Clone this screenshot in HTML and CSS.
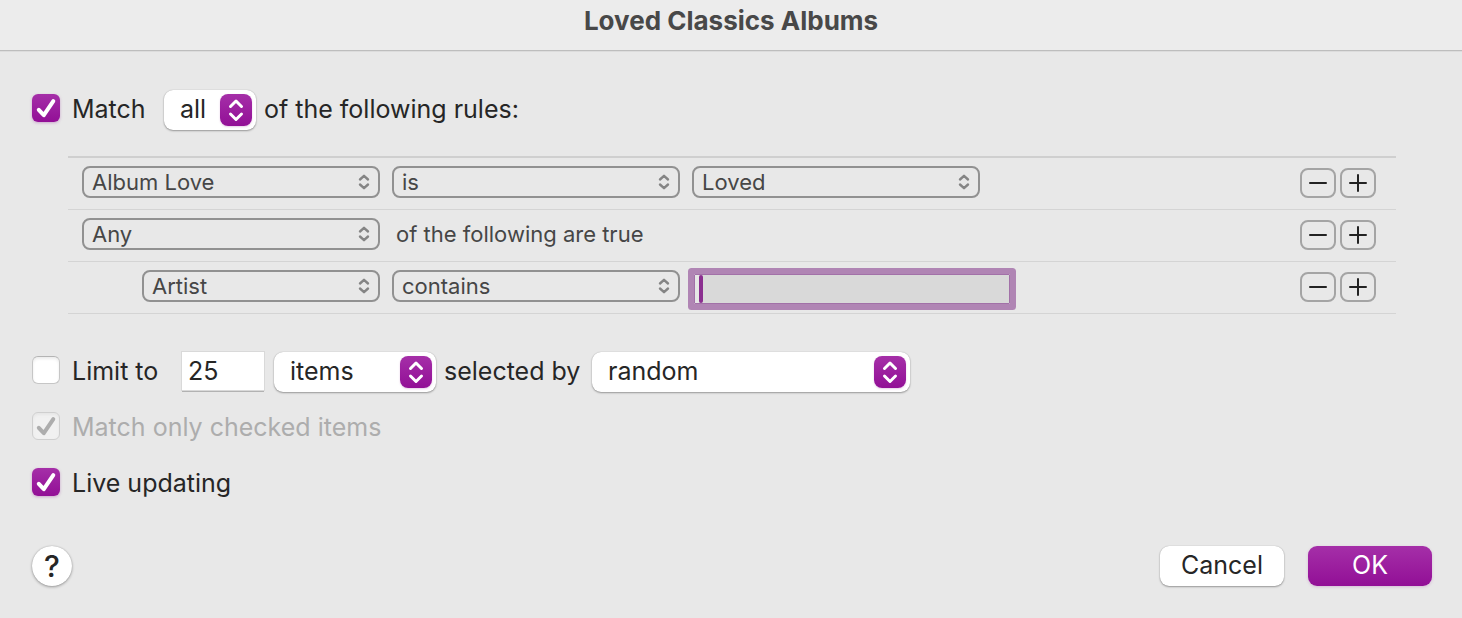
FILE: index.html
```html
<!DOCTYPE html>
<html lang="en">
<head>
<meta charset="utf-8">
<title>Loved Classics Albums</title>
<link rel="stylesheet" href="styles.css">
</head>
<body>
<svg class="defs" aria-hidden="true">
  <symbol id="tick" viewBox="0 0 28 28"><path d="M6.800 15.800 L11.800 21.200 L21.300 7.200" fill="none" stroke="currentColor" stroke-width="4" stroke-linecap="round" stroke-linejoin="round"/></symbol>
  <symbol id="arrows" viewBox="0 0 32 32"><path d="M10.500 12.500 L16 7 L21.500 12.500 M10.500 20 L16 25.500 L21.500 20" fill="none" stroke="currentColor" stroke-width="3" stroke-linecap="round" stroke-linejoin="round"/></symbol>
  <symbol id="arrows-small" viewBox="0 0 12 16"><path d="M2 5.500 L6 1.800 L10 5.500 M2 10.500 L6 14.200 L10 10.500" fill="none" stroke="currentColor" stroke-width="2.400" stroke-linecap="round" stroke-linejoin="round"/></symbol>
  <symbol id="minus" viewBox="0 0 18 18"><path d="M1 9 H17" stroke="currentColor" stroke-width="2" stroke-linecap="round"/></symbol>
  <symbol id="plus" viewBox="0 0 18 18"><path d="M1 9 H17 M9 1 V17" stroke="currentColor" stroke-width="2" stroke-linecap="round"/></symbol>
</svg>
<header class="titlebar"><h1 class="title">Loved Classics Albums</h1></header>
<form class="sheet">
  <div class="line">
    <label class="check"><span class="box"><input type="checkbox" checked><svg class="tick"><use href="#tick"/></svg></span><span class="match">Match</span></label>
    <span class="popup popup-all"><select aria-label="Match mode"><option>all</option></select><svg class="arrows"><use href="#arrows"/></svg></span>
    <span class="words">of the following rules:</span>
  </div>

  <div class="rules">
    <div class="rule">
      <span class="pick pick-wide"><select aria-label="Field"><option>Album Love</option></select><svg class="arrows-small"><use href="#arrows-small"/></svg></span>
      <span class="pick"><select aria-label="Comparison"><option>is</option></select><svg class="arrows-small"><use href="#arrows-small"/></svg></span>
      <span class="pick"><select aria-label="Value"><option>Loved</option></select><svg class="arrows-small"><use href="#arrows-small"/></svg></span>
      <span class="steps"><button type="button" class="step" aria-label="Remove rule"><svg><use href="#minus"/></svg></button><button type="button" class="step" aria-label="Add rule"><svg><use href="#plus"/></svg></button></span>
    </div>
    <div class="rule">
      <span class="pick pick-wide"><select aria-label="Group mode"><option>Any</option></select><svg class="arrows-small"><use href="#arrows-small"/></svg></span>
      <span class="rule-words">of the following are true</span>
      <span class="steps"><button type="button" class="step" aria-label="Remove rule"><svg><use href="#minus"/></svg></button><button type="button" class="step" aria-label="Add rule"><svg><use href="#plus"/></svg></button></span>
    </div>
    <div class="rule rule-nested">
      <span class="pick pick-nested"><select aria-label="Field"><option>Artist</option></select><svg class="arrows-small"><use href="#arrows-small"/></svg></span>
      <span class="pick"><select aria-label="Comparison"><option>contains</option></select><svg class="arrows-small"><use href="#arrows-small"/></svg></span>
      <span class="entry"><input type="text" aria-label="Artist name"><i class="caret"></i></span>
      <span class="steps"><button type="button" class="step" aria-label="Remove rule"><svg><use href="#minus"/></svg></button><button type="button" class="step" aria-label="Add rule"><svg><use href="#plus"/></svg></button></span>
    </div>
  </div>

  <div class="line">
    <label class="check"><span class="box"><input type="checkbox"></span><span class="limit">Limit to</span></label>
    <input class="amount" type="text" value="25" aria-label="Limit amount">
    <span class="popup popup-items"><select aria-label="Limit unit"><option>items</option></select><svg class="arrows"><use href="#arrows"/></svg></span>
    <span class="words selected-by">selected by</span>
    <span class="popup popup-order"><select aria-label="Selected by"><option>random</option></select><svg class="arrows"><use href="#arrows"/></svg></span>
  </div>
  <div class="options">
    <label class="check check-off"><span class="box"><input type="checkbox" checked disabled><svg class="tick"><use href="#tick"/></svg></span>Match only checked items</label>
    <label class="check"><span class="box"><input type="checkbox" checked><svg class="tick"><use href="#tick"/></svg></span>Live updating</label>
  </div>

  <footer class="actions">
    <button type="button" class="help" aria-label="Help">?</button>
    <button type="button" class="button">Cancel</button>
    <button type="submit" class="button button-main">OK</button>
  </footer>
</form>
</body>
</html>
```
FILE: styles.css
```css
* { box-sizing: border-box; }
body {
  margin: 0;
  background: #e8e8e8;
  color: #262626;
  font: 430 25px/38px Inter, "Liberation Sans", sans-serif;
}
input, select, button {
  appearance: none;
  margin: 0;
  padding: 0;
  border: 0;
  outline: 0;
  background: none;
  color: inherit;
  font: inherit;
}
.defs { display: none; }
svg { display: block; }

.titlebar {
  height: 52px;
  padding-top: 2px;
  background: #ececec;
  border-bottom: 1px solid #dcdcdc;
  box-shadow: inset 0 -1px #bdbdbd;
}
.title {
  margin: 0;
  color: #484848;
  font-size: 26px;
  font-weight: 700;
  text-align: center;
}
.sheet { padding: 38px 30px 32px 32px; }
.line { display: flex; align-items: flex-start; white-space: nowrap; }
.words { padding: 0 8px; }
.selected-by { min-width: 156px; }

.check { display: flex; align-items: flex-start; gap: 12px; height: 38px; }
.match { min-width: 92px; }
.limit { min-width: 110px; }
.check-off { color: #adadad; }
.box { display: grid; width: 28px; height: 28px; margin-top: 4px; }
.box > * { grid-area: 1 / 1; width: 28px; height: 28px; }
.box input {
  border: 1px solid #c6c6c6;
  border-top-color: #b4b4b4;
  border-radius: 6px;
  background: #fff;
  box-shadow: inset 0 2px 3px #ececec;
}
.box input:checked {
  border: 0;
  background: linear-gradient(#a52fa8, #920f96);
  box-shadow: 0 1px 3px #a040a466;
}
.box input:checked:disabled {
  border: 1px solid #cfcfcf;
  background: #f1f1f1;
  box-shadow: inset 0 2px 3px #e6e6e6;
}
.tick { color: #fff; pointer-events: none; }
.check-off .tick { color: #adadad; }

.popup { display: grid; height: 40px; }
.popup > * { grid-area: 1 / 1; }
.popup select {
  padding: 0 40px 2px 16px;
  border-radius: 9px;
  background: #fff;
  box-shadow: 0 0 1px #0004, 0 1px 2px #0005;
}
.popup-all { width: 92px; }
.popup-items { width: 162px; }
.popup-order { width: 318px; }
.arrows {
  width: 32px;
  height: 32px;
  margin: 4px;
  justify-self: end;
  border-radius: 8px;
  background: linear-gradient(#a52fa8, #920f96);
  box-shadow: 0 1px 2px #a040a444;
  color: #fff;
  pointer-events: none;
}

.rules {
  margin: 26px 36px 38px 36px;
  border-top: 2px solid #cfcfcf;
  color: #464646;
  font-size: 22px;
  font-weight: 400;
  line-height: 32px;
}
.rule {
  display: flex;
  align-items: flex-start;
  gap: 12px;
  height: 52px;
  padding: 8px 20px 0 14px;
  border-bottom: 1px solid #d4d4d4;
}
.rule-nested { padding-left: 74px; }
.pick { display: grid; align-items: center; width: 288px; height: 32px; }
.pick-wide { width: 298px; }
.pick-nested { width: 238px; }
.pick > * { grid-area: 1 / 1; }
.pick select {
  height: 32px;
  padding: 0 32px 0 8px;
  border: 2px solid #919191;
  border-radius: 8px;
  line-height: 28px;
}
.arrows-small {
  width: 12px;
  height: 16px;
  margin-right: 10px;
  justify-self: end;
  color: #858585;
  pointer-events: none;
}
.rule-words { padding-left: 4px; }
.steps { display: flex; gap: 4px; margin: 2px 0 0 auto; }
.step {
  display: grid;
  place-items: center;
  width: 36px;
  height: 30px;
  border: 2px solid #a4a4a4;
  border-radius: 8px;
  color: #222;
}
.step svg { width: 18px; height: 18px; }
.entry { display: grid; align-items: center; margin: 4px 0 0 2px; }
.entry > * { grid-area: 1 / 1; }
.entry input {
  width: 316px;
  height: 30px;
  padding: 0 8px;
  border: 1px solid #a271a8;
  border-radius: 1px;
  background: linear-gradient(90deg, #e6e6e6 4px, #d9d9d9 4px);
  box-shadow: 0 0 0 6px #b085b4;
}
.caret {
  width: 4px;
  height: 28px;
  margin-left: 5px;
  border-radius: 2px;
  background: #8b2f90;
  pointer-events: none;
}

.amount {
  width: 82px;
  height: 38px;
  margin-right: 10px;
  padding: 0 6px;
  background: #fff;
  box-shadow: 0 0 0 1px #d9d9d9, 0 2px #b2b2b2;
}
.options { display: grid; justify-items: start; gap: 18px; margin: 16px 0 44px; }

.actions { display: flex; gap: 24px; }
.help {
  width: 40px;
  height: 40px;
  margin-right: auto;
  border-radius: 50%;
  background: #fff;
  box-shadow: 0 0 1px #0004, 0 1px 3px #0005;
  font-size: 30px;
  font-weight: 500;
}
.button {
  width: 124px;
  height: 40px;
  padding-bottom: 2px;
  border-radius: 9px;
  background: #fff;
  box-shadow: 0 0 1px #0004, 0 1px 2px #0005;
}
.button-main {
  background: linear-gradient(#a52fa8, #920f96);
  box-shadow: 0 1px 3px #a040a444;
  color: #fff;
}
```
